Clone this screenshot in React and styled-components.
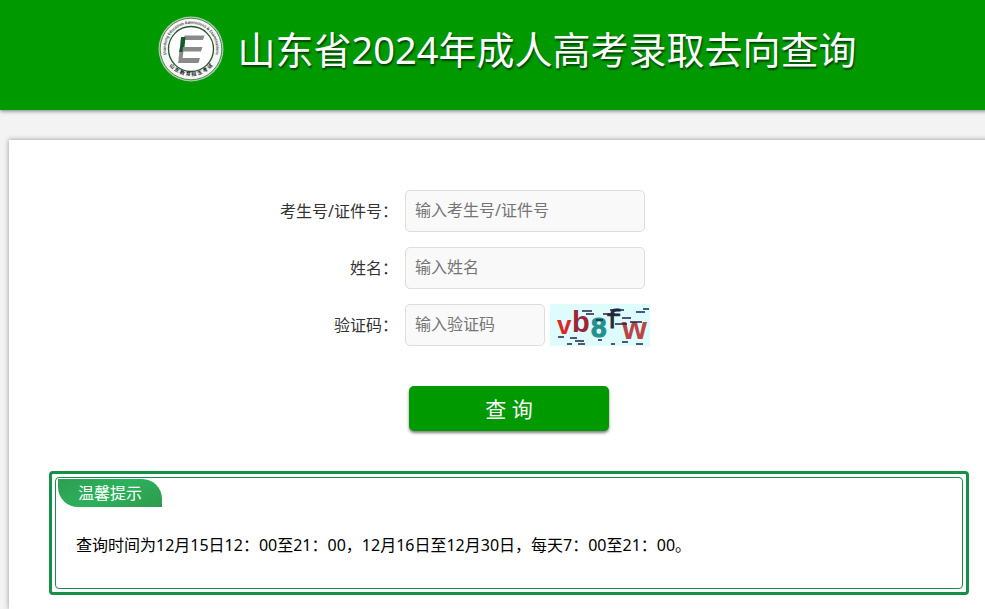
import React, { useState } from 'react'
import styled, { createGlobalStyle } from 'styled-components'

const GlobalStyle = createGlobalStyle`
    * {
        box-sizing: border-box;
    }

    body {
        margin: 0;
        overflow-x: hidden;
        background: #f3f3f3;
        color: #333;
        font: 16px/24px 'Noto Sans', 'Noto Sans CJK SC', sans-serif;
    }

    input, button {
        font: inherit;
    }
`

const Page = styled.div`
    display: flex;
    flex-direction: column;
    min-width: 1018px;
    min-height: 100vh;
`

const Header = styled.header`
    display: flex;
    justify-content: center;
    gap: 14px;
    height: 110px;
    padding: 16px 4px 0 0;
    background: #090;
    box-shadow: 0 1px 4px rgba(0, 0, 0, .5);
`

const Title = styled.h1`
    margin: 0;
    color: #fff;
    font-size: 38px;
    font-weight: 400;
    line-height: 66px;
    white-space: nowrap;
    text-shadow: 1px 2px 2px rgba(0, 0, 0, .6);
`

const Card = styled.main`
    flex: 1;
    margin: 30px 9px 0;
    padding: 50px 40px 14px;
    background: #fff;
    box-shadow: 0 0 5px rgba(0, 0, 0, .4);
`

const Form = styled.form`
    display: flex;
    flex-direction: column;
    gap: 15px;
    width: 460px;
    margin: 0 auto 40px;
`

const Row = styled.div`
    display: grid;
    grid-template-columns: 119px 1fr;
    align-items: center;
    column-gap: 7px;
`

const Label = styled.label`
    text-align: right;
    white-space: nowrap;
`

const Field = styled.div`
    display: flex;
    gap: 5px;
`

const Input = styled.input`
    width: ${props => props.$short ? '140px' : '240px'};
    height: 42px;
    padding: 0 9px 2px;
    border: 1px solid #ddd;
    border-radius: 5px;
    background: #f9f9f9;
    color: #333;

    &::placeholder {
        color: #757575;
        opacity: 1;
    }
`

const Submit = styled.button`
    align-self: center;
    width: 200px;
    height: 45px;
    margin-top: 25px;
    border: 0;
    border-radius: 5px;
    background: #090;
    box-shadow: 0 2px 3px rgba(0, 0, 0, .5);
    color: #fff;
    font-size: 21px;
    cursor: pointer;
`

const Notice = styled.section`
    padding: 3px;
    border: 3px solid #168f48;
    border-radius: 4px;
`

const NoticeBody = styled.div`
    min-height: 112px;
    padding: 1px 2px;
    border: 1px solid #168f48;
    border-radius: 4px;
`

const NoticeTitle = styled.h2`
    width: 104px;
    margin: 0;
    border-radius: 0 20px 0 20px;
    background: linear-gradient(150deg, #2f9e50, #2bb15c 50%, #2f9a4c);
    color: #fff;
    font-size: 16px;
    font-weight: 400;
    line-height: 28px;
    text-align: center;
`

const NoticeText = styled.p`
    margin: 26px 18px;
    color: #000;
`

const Logo = () => (
    <svg width="66" height="66" viewBox="-1 0 66 66" role="img" aria-label="山东省教育招生考试院">
        <defs>
            <path id="ring-top" d="M8.5 42A25.2 25.2 0 1 1 55.5 42" />
            <path id="ring-bottom" d="M4.3 38A28.5 28.5 0 0 0 59.7 38" />
        </defs>
        <circle cx="32" cy="33" r="32.5" fill="#a9cfa9" />
        <circle cx="32" cy="33" r="30.8" fill="#f4f6f4" stroke="#3f6b45" strokeWidth=".8" />
        <circle cx="32" cy="33" r="22.5" fill="#fff" stroke="#27552f" strokeWidth="1.3" />
        <text fontSize="3.8" fontWeight="600" fill="#333">
            <textPath href="#ring-top" startOffset="50%" textAnchor="middle">Shandong Education Admissions &amp; Examinations</textPath>
        </text>
        <text fontSize="5" fontWeight="700" fill="#222">
            <textPath href="#ring-bottom" startOffset="50%" textAnchor="middle">山 东 教 育 招 生 考 试</textPath>
        </text>
        <path d="M25.500 19.500H45.500L44 24H25zM22.500 31H43.500L42 35.500H21.500zM20 42H41L39.500 47H19z" fill="#8a8a8a" />
        <path d="M20.500 35H24.500L23.500 43H19.500z" fill="#8a8a8a" />
        <path d="M22 21H26.500L25.500 31H21zM21 31H24L23.500 36H20z" fill="#145c27" />
    </svg>
)

const Captcha = () => (
    <svg width="100" height="42" viewBox="0 0 100 42" role="img" aria-label="验证码">
        <rect width="100" height="42" fill="#defcfc" />
        <g fontFamily="Liberation Sans, sans-serif" fontWeight="700">
            <text x="7" y="30" fontSize="26" fill="#dc2828">v</text>
            <text x="22" y="28" fontSize="29" fill="#9c2638">b</text>
            <text x="41" y="33" fontSize="28" fill="#23908e" stroke="#23908e">8</text>
            <text x="56" y="24" fontSize="26" fill="#222b38" fontWeight="400" fontFamily="Liberation Mono, monospace" stroke="#222b38">f</text>
            <text x="72" y="35" fontSize="32" fill="#b94545">w</text>
        </g>
        <path
            d="M32 7h10M36 10h8M53 10h12M60 6h14M72 14h9M86 8h9M93 5h6M46 16h7M65 20h12M80 18h12M8 33h6M20 34h7M25 37h9M28 40h7M48 36h4M61 40h4M72 38h6M86 40h7M17 40h5"
            stroke="#20204e"
            strokeWidth="1.4"
        />
    </svg>
)

const App = () => {
    const [values, setValues] = useState({ number: '', name: '', code: '' })

    const handleChange = e => {
        const { name, value } = e.target
        setValues({ ...values, [name]: value })
    }

    return (
        <Page>
            <GlobalStyle />
            <Header>
                <Logo />
                <Title>山东省2024年成人高考录取去向查询</Title>
            </Header>

            <Card>
                <Form onSubmit={e => e.preventDefault()} autoComplete="off">
                    <Row>
                        <Label htmlFor="number">考生号/证件号：</Label>
                        <Input id="number" name="number" placeholder="输入考生号/证件号" value={values.number} onChange={handleChange} />
                    </Row>
                    <Row>
                        <Label htmlFor="name">姓名：</Label>
                        <Input id="name" name="name" placeholder="输入姓名" value={values.name} onChange={handleChange} />
                    </Row>
                    <Row>
                        <Label htmlFor="code">验证码：</Label>
                        <Field>
                            <Input $short id="code" name="code" placeholder="输入验证码" value={values.code} onChange={handleChange} />
                            <Captcha />
                        </Field>
                    </Row>
                    <Submit type="submit">查 询</Submit>
                </Form>

                <Notice>
                    <NoticeBody>
                        <NoticeTitle>温馨提示</NoticeTitle>
                        <NoticeText>查询时间为12月15日12：00至21：00，12月16日至12月30日，每天7：00至21：00。</NoticeText>
                    </NoticeBody>
                </Notice>
            </Card>
        </Page>
    )
}

export default App
